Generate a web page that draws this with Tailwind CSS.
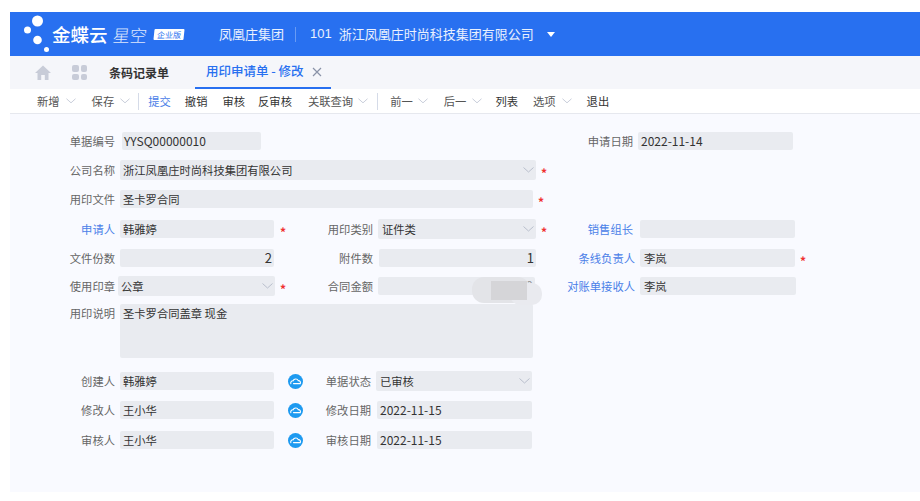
<!DOCTYPE html>
<html lang="zh-CN">
<head>
<meta charset="UTF-8">
<title>用印申请单 - 修改</title>
<script src="https://cdn.jsdelivr.net/npm/@tailwindcss/browser@4"></script>
</head>
<body class="bg-white overflow-hidden">
<div class="w-[920px] h-[501px] pt-3 pl-2.5 bg-white text-[11.3px] text-[#333] font-['Noto_Sans_CJK_SC','Noto_Sans',sans-serif]">
  <!-- header -->
  <header class="h-[44px] bg-[#2870f0] flex items-center text-white">
    <svg class="ml-[13px] w-[30px] h-[42px] -mt-[2px] shrink-0" viewBox="0 0 30 42">
      <circle cx="14.5" cy="9" r="5.5" fill="#fff"/>
      <circle cx="4.5" cy="18" r="3.5" fill="#fff"/>
      <circle cx="14.5" cy="28" r="4.3" fill="#fff"/>
      <circle cx="23.5" cy="37.5" r="2.5" fill="#fff"/>
    </svg>
    <span class="-ml-[1px] w-[56px] text-[18.5px] leading-none font-medium whitespace-nowrap">金蝶云</span>
    <span class="ml-[5px] w-[34px] text-[17px] leading-none font-light -skew-x-6 text-white/85 whitespace-nowrap">星空</span>
    <span class="ml-[7px] w-[30px] h-[11px] bg-white text-[#2870f0] text-[8px] leading-[11px] text-center -skew-x-6 rounded-[1px]">企业版</span>
    <span class="ml-[35px] text-[13px] text-white/90">凤凰庄集团</span>
    <span class="ml-[11px] w-px h-[15px] bg-white/30"></span>
    <span class="ml-[14px] text-[13px] text-white/90 font-['Liberation_Sans','Noto_Sans_CJK_SC',sans-serif]">101</span>
    <span class="ml-[7px] text-[13px] text-white/90">浙江凤凰庄时尚科技集团有限公司</span>
    <span class="ml-[13px] w-0 h-0 border-x-[4px] border-x-transparent border-t-[5px] border-t-white"></span>
  </header>
  <!-- tabs -->
  <nav class="h-[33px] bg-[#f5f6fa] flex items-stretch">
    <div class="flex items-center ml-[25px] w-[37px]">
      <svg class="w-[16px] h-[15px]" viewBox="0 0 16 15"><path d="M8 0.5 L16 8 H13.5 V15 H9.8 V10 H6.2 V15 H2.5 V8 H0 Z" fill="#c8ccd8"/></svg>
    </div>
    <div class="grid grid-cols-2 gap-[2px] w-[15px] h-[15px] self-center">
      <span class="bg-[#c8ccd8] rounded-[2px]"></span><span class="bg-[#c8ccd8] rounded-[2px]"></span>
      <span class="bg-[#c8ccd8] rounded-[2px]"></span><span class="bg-[#c8ccd8] rounded-[2px]"></span>
    </div>
    <div class="ml-[22px] flex items-center text-[12px] font-bold text-[#333]">条码记录单</div>
    <div class="ml-[26px] w-[136px] pl-[11px] border-b-2 border-[#2870f0] flex items-center text-[12.5px] leading-none text-[#2870f0] font-medium">
      用印申请单 - 修改
      <svg class="ml-[8px] w-[10px] h-[10px]" viewBox="0 0 10 10"><path d="M1 1 L9 9 M9 1 L1 9" stroke="#8a93a8" stroke-width="1.2"/></svg>
    </div>
  </nav>
  <!-- toolbar -->
  <div class="h-[25px] bg-white border-b border-[#e6e8ee] flex items-center text-[#555] pl-[27px]">
    <span>新增</span>
    <svg class="ml-[6px] w-[10px] h-[6px]" viewBox="0 0 11 6"><path d="M0.5 0.5 L5.5 5 L10.5 0.5" fill="none" stroke="#c3c9d6"/></svg>
    <span class="ml-[16px]">保存</span>
    <svg class="ml-[6px] w-[10px] h-[6px]" viewBox="0 0 11 6"><path d="M0.5 0.5 L5.5 5 L10.5 0.5" fill="none" stroke="#c3c9d6"/></svg>
    <span class="ml-[8px] w-px h-[17px] bg-[#d5dbe8]"></span>
    <span class="ml-[9px] text-[#4a80e8]">提交</span>
    <span class="ml-[14px] text-[#333]">撤销</span>
    <span class="ml-[15px] text-[#333]">审核</span>
    <span class="ml-[13px] text-[#333]">反审核</span>
    <span class="ml-[16px]">关联查询</span>
    <svg class="ml-[5px] w-[10px] h-[6px]" viewBox="0 0 11 6"><path d="M0.5 0.5 L5.5 5 L10.5 0.5" fill="none" stroke="#c3c9d6"/></svg>
    <span class="ml-[9px] w-px h-[17px] bg-[#d5dbe8]"></span>
    <span class="ml-[12px]">前一</span>
    <svg class="ml-[5px] w-[10px] h-[6px]" viewBox="0 0 11 6"><path d="M0.5 0.5 L5.5 5 L10.5 0.5" fill="none" stroke="#c3c9d6"/></svg>
    <span class="ml-[16px]">后一</span>
    <svg class="ml-[6px] w-[10px] h-[6px]" viewBox="0 0 11 6"><path d="M0.5 0.5 L5.5 5 L10.5 0.5" fill="none" stroke="#c3c9d6"/></svg>
    <span class="ml-[13px] text-[#333]">列表</span>
    <span class="ml-[15px]">选项</span>
    <svg class="ml-[6px] w-[10px] h-[6px]" viewBox="0 0 11 6"><path d="M0.5 0.5 L5.5 5 L10.5 0.5" fill="none" stroke="#c3c9d6"/></svg>
    <span class="ml-[15px] text-[#333]">退出</span>
  </div>
  <!-- form -->
  <main class="relative h-[378px] bg-[#f9faff] text-[#333]">
    <div class="pt-[18px]"></div>
    <div class="flex items-center h-[18px]">
      <label class="w-[105px] text-right text-[#666]">单据编号</label>
      <div class="ml-[7px] w-[139px] h-full bg-[#e9ebf0] rounded-[2px] pl-[2px] leading-[18px] text-[12px]">YYSQ00000010</div>
      <label class="ml-[317px] w-[55px] text-right text-[#666]">申请日期</label>
      <div class="ml-[5px] w-[155px] h-full bg-[#e9ebf0] rounded-[2px] pl-[3px] leading-[18px] text-[12px]">2022-11-14</div>
    </div>
    <div class="flex items-center h-[18px] mt-[11px]">
      <label class="w-[105px] text-right text-[#666]">公司名称</label>
      <div class="ml-[5px] w-[416px] h-[20px] bg-[#e9ebf0] rounded-[2px] pl-[3px] pr-[2px] leading-[20px] flex justify-between items-center">
        <span>浙江凤凰庄时尚科技集团有限公司</span>
        <svg class="w-[11px] h-[6px]" viewBox="0 0 11 6"><path d="M0.5 0.5 L5.5 5 L10.5 0.5" fill="none" stroke="#b9bfcc"/></svg>
      </div>
      <span class="ml-[5px] mt-[5px] text-[#f03030] text-[12px] font-bold">*</span>
    </div>
    <div class="flex items-center h-[18px] mt-[11px]">
      <label class="w-[105px] text-right text-[#666]">用印文件</label>
      <div class="ml-[5px] w-[413px] h-full bg-[#e9ebf0] rounded-[2px] pl-[3px] leading-[18px]">圣卡罗合同</div>
      <span class="ml-[5px] mt-[5px] text-[#f03030] text-[12px] font-bold">*</span>
    </div>
    <div class="flex items-center h-[18px] mt-[12px]">
      <label class="w-[105px] text-right text-[#4a80e8]">申请人</label>
      <div class="ml-[5px] w-[154px] h-full bg-[#e9ebf0] rounded-[2px] pl-[3px] leading-[18px]">韩雅婷</div>
      <span class="ml-[6px] mt-[5px] w-[8px] text-[#f03030] text-[12px] font-bold">*</span>
      <label class="ml-[2px] w-[83px] text-right text-[#666]">用印类别</label>
      <div class="ml-[5px] w-[158px] h-[20px] bg-[#e9ebf0] rounded-[2px] pl-[4px] pr-[2px] flex justify-between items-center">
        <span>证件类</span>
        <svg class="w-[11px] h-[6px]" viewBox="0 0 11 6"><path d="M0.5 0.5 L5.5 5 L10.5 0.5" fill="none" stroke="#b9bfcc"/></svg>
      </div>
      <span class="ml-[5px] mt-[5px] w-[8px] text-[#f03030] text-[12px] font-bold">*</span>
      <label class="ml-[31px] w-[53px] text-right text-[#4a80e8]">销售组长</label>
      <div class="ml-[7px] w-[155px] h-full bg-[#e9ebf0] rounded-[2px]"></div>
    </div>
    <div class="flex items-center h-[18px] mt-[11px]">
      <label class="w-[105px] text-right text-[#666]">文件份数</label>
      <div class="ml-[5px] w-[154px] h-full bg-[#e9ebf0] rounded-[2px] pr-[2px] leading-[18px] text-right text-[13px]">2</div>
      <label class="ml-[16px] w-[83px] text-right text-[#666]">附件数</label>
      <div class="ml-[6px] w-[157px] h-full bg-[#e9ebf0] rounded-[2px] pr-[2px] leading-[18px] text-right text-[13px]">1</div>
      <label class="ml-[14px] w-[85px] text-right text-[#4a80e8]">条线负责人</label>
      <div class="ml-[5px] w-[155px] h-full bg-[#e9ebf0] rounded-[2px] pl-[4px] leading-[18px]">李岚</div>
      <span class="ml-[5px] mt-[5px] text-[#f03030] text-[12px] font-bold">*</span>
    </div>
    <div class="flex items-center h-[18px] mt-[10px]">
      <label class="w-[105px] text-right text-[#666]">使用印章</label>
      <div class="ml-[3px] w-[157px] h-[20px] bg-[#e9ebf0] rounded-[2px] pl-[3px] pr-[2px] flex justify-between items-center">
        <span>公章</span>
        <svg class="w-[11px] h-[6px]" viewBox="0 0 11 6"><path d="M0.5 0.5 L5.5 5 L10.5 0.5" fill="none" stroke="#b9bfcc"/></svg>
      </div>
      <span class="ml-[5px] mt-[5px] w-[8px] text-[#f03030] text-[12px] font-bold">*</span>
      <label class="ml-[2px] w-[83px] text-right text-[#666]">合同金额</label>
      <div class="ml-[5px] w-[157px] h-full bg-[#e9ebf0] rounded-[2px] pr-[2px] leading-[18px] text-right text-[#999] text-[13px]">.00</div>
      <label class="ml-[15px] w-[85px] text-right text-[#4a80e8]">对账单接收人</label>
      <div class="ml-[5px] w-[156px] h-full bg-[#e9ebf0] rounded-[2px] pl-[4px] leading-[18px]">李岚</div>
    </div>
    <div class="flex mt-[9px]">
      <label class="w-[105px] text-right text-[#666] mt-[1px]">用印说明</label>
      <div class="ml-[5px] w-[413px] h-[54px] bg-[#e9ebf0] rounded-[2px] pl-[3px] leading-[18px]">圣卡罗合同盖章 现金</div>
    </div>
    <div class="flex items-center h-[18px] mt-[14px]">
      <label class="w-[105px] text-right text-[#666]">创建人</label>
      <div class="ml-[5px] w-[154px] h-full bg-[#e9ebf0] rounded-[2px] pl-[3px] leading-[18px]">韩雅婷</div>
      <svg class="ml-[14px] w-[15px] h-[15px]" viewBox="0 0 15 15"><circle cx="7.5" cy="7.5" r="7.5" fill="#1e9af0"/><path d="M2.8 9.6 C2.4 7.6 3.8 6.6 5.1 6.8 C5.9 4.6 9.3 4.3 10.2 6.6 C11.8 6.5 12.9 7.8 12.3 9.6 H5.5" fill="none" stroke="#fff" stroke-width="1.1" stroke-linecap="round"/></svg>
      <label class="ml-[8px] w-[60px] text-right text-[#666]">单据状态</label>
      <div class="ml-[5px] w-[156px] h-[20px] bg-[#e9ebf0] rounded-[2px] pl-[4px] pr-[2px] flex justify-between items-center">
        <span>已审核</span>
        <svg class="w-[11px] h-[6px]" viewBox="0 0 11 6"><path d="M0.5 0.5 L5.5 5 L10.5 0.5" fill="none" stroke="#b9bfcc"/></svg>
      </div>
    </div>
    <div class="flex items-center h-[18px] mt-[11px]">
      <label class="w-[105px] text-right text-[#666]">修改人</label>
      <div class="ml-[5px] w-[154px] h-full bg-[#e9ebf0] rounded-[2px] pl-[3px] leading-[18px]">王小华</div>
      <svg class="ml-[14px] w-[15px] h-[15px]" viewBox="0 0 15 15"><circle cx="7.5" cy="7.5" r="7.5" fill="#1e9af0"/><path d="M2.8 9.6 C2.4 7.6 3.8 6.6 5.1 6.8 C5.9 4.6 9.3 4.3 10.2 6.6 C11.8 6.5 12.9 7.8 12.3 9.6 H5.5" fill="none" stroke="#fff" stroke-width="1.1" stroke-linecap="round"/></svg>
      <label class="ml-[8px] w-[60px] text-right text-[#666]">修改日期</label>
      <div class="ml-[6px] w-[155px] h-full bg-[#e9ebf0] rounded-[2px] pl-[3px] leading-[18px] text-[12px]">2022-11-15</div>
    </div>
    <div class="flex items-center h-[18px] mt-[12px]">
      <label class="w-[105px] text-right text-[#666]">审核人</label>
      <div class="ml-[5px] w-[154px] h-full bg-[#e9ebf0] rounded-[2px] pl-[3px] leading-[18px]">王小华</div>
      <svg class="ml-[14px] w-[15px] h-[15px]" viewBox="0 0 15 15"><circle cx="7.5" cy="7.5" r="7.5" fill="#1e9af0"/><path d="M2.8 9.6 C2.4 7.6 3.8 6.6 5.1 6.8 C5.9 4.6 9.3 4.3 10.2 6.6 C11.8 6.5 12.9 7.8 12.3 9.6 H5.5" fill="none" stroke="#fff" stroke-width="1.1" stroke-linecap="round"/></svg>
      <label class="ml-[8px] w-[60px] text-right text-[#666]">审核日期</label>
      <div class="ml-[6px] w-[155px] h-full bg-[#e9ebf0] rounded-[2px] pl-[3px] leading-[18px] text-[12px]">2022-11-15</div>
    </div>
    <!-- redaction blur over the amount -->
    <div class="absolute left-[462px] top-[163px] w-[58px] h-[26px] bg-[#e3e4e8] rounded-[12px]"></div>
    <div class="absolute left-[500px] top-[169px] w-[32px] h-[22px] bg-[#e9eaef] rounded-[10px]"></div>
    <div class="absolute left-[481px] top-[167px] w-[36px] h-[19px] bg-[#d5d5d8]"></div>
  </main>
</div>
</body>
</html>
